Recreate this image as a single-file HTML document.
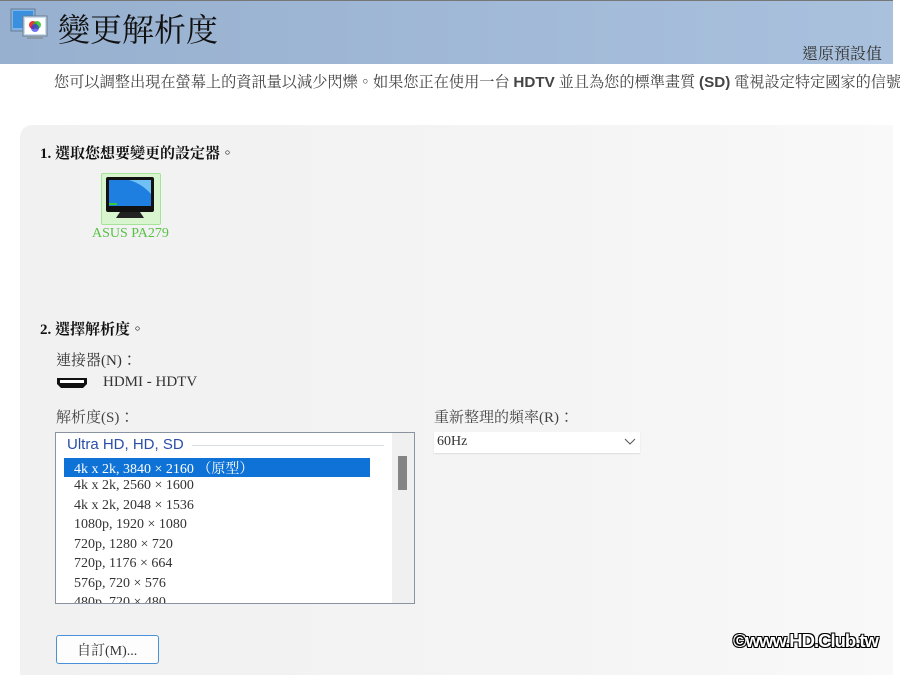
<!DOCTYPE html><html><head><meta charset="utf-8"><style>
body{margin:0;width:900px;height:675px;overflow:hidden;background:#fff;font-family:"Liberation Serif","Noto Serif CJK SC",serif;position:relative;color:#222}
.abs{position:absolute;white-space:nowrap}
#hdr{left:0;top:0;width:893px;height:63px;background:linear-gradient(90deg,#97b0cf,#a9c1dd);border-top:1px solid #777}
#panel{left:20px;top:125px;width:873px;height:550px;background:linear-gradient(90deg,#f1f1f1,#f4f4f4 60%,#f9f9f9);border-radius:12px 0 0 0}
.cjk{font-family:"Liberation Serif","Noto Serif CJK TC",serif}
.sans{font-family:"Liberation Sans","Noto Sans CJK TC",sans-serif}
.row{position:absolute;left:18px;font-size:14px;color:#333}
</style></head><body>
<div id="hdr" class="abs"></div>
<svg class="abs" style="left:9px;top:8px" width="40" height="32" viewBox="0 0 40 32">
<rect x="2" y="1" width="24" height="22" fill="#7fb3e8" stroke="#6a7c8e"/><rect x="4" y="3" width="20" height="17" fill="#3a8fdf"/>
<rect x="14" y="8" width="24" height="20" fill="#c9dbee" stroke="#6a7c8e"/><rect x="16" y="10" width="20" height="16" fill="#fff"/>
<circle cx="24" cy="17" r="4" fill="#e33"/><circle cx="28" cy="17" r="4" fill="#2b2" opacity=".8"/><circle cx="26" cy="20" r="4" fill="#33e" opacity=".7"/>
<rect x="18" y="28" width="16" height="3" fill="#8a98a8"/></svg>
<div class="abs cjk" style="left:58px;top:5px;font-size:32px;color:#111">變更解析度</div>
<div class="abs cjk" style="left:802px;top:41px;font-size:16px;color:#333">還原預設值</div>
<div class="abs cjk" style="left:54px;top:71px;font-size:15.2px;color:#444">您可以調整出現在螢幕上的資訊量以減少閃爍。如果您正在使用一台 <b class="sans">HDTV</b> 並且為您的標準畫質 <b class="sans">(SD)</b> 電視設定特定國家的信號</div>
<div id="panel" class="abs"></div>
<div class="abs cjk" style="left:40px;top:142px;font-size:15px;font-weight:bold;color:#111">1. 選取您想要變更的設定器。</div>
<div class="abs" style="left:101px;top:173px;width:58px;height:50px;background:#d8f5d0;border:1px solid #a6e39a;border-radius:2px"></div>
<svg class="abs" style="left:104px;top:176px" width="52" height="44" viewBox="0 0 52 44"><rect x="2" y="1" width="48" height="35" rx="2" fill="#111"/><rect x="5" y="4" width="42" height="26" fill="#1e7fe0"/><path d="M25 4h22v14C40 10 32 6 25 4z" fill="#6fc0f5"/><rect x="5" y="27" width="8" height="2" fill="#3c3"/><path d="M16 36h20l4 6H12z" fill="#222"/></svg>
<div class="abs cjk" style="left:92px;top:226px;font-size:14px;color:#58c244">ASUS PA279</div>
<div class="abs cjk" style="left:40px;top:318px;font-size:15px;font-weight:bold;color:#111">2. 選擇解析度。</div>
<div class="abs cjk" style="left:56px;top:349px;font-size:15px;color:#333">連接器(N)：</div>
<svg class="abs" style="left:56px;top:376px" width="32" height="14" viewBox="0 0 32 14"><path d="M1 2h30v6l-4 4H5L1 8z" fill="#111"/><rect x="4" y="4" width="24" height="3" fill="#fff"/></svg>
<div class="abs cjk" style="left:103px;top:374px;font-size:15px;color:#333">HDMI - HDTV</div>
<div class="abs cjk" style="left:56px;top:406px;font-size:15px;color:#444">解析度(S)：</div>
<div class="abs" style="left:55px;top:432px;width:358px;height:170px;background:#fff;border:1px solid #8a94a0;overflow:hidden">
<div class="abs sans" style="left:11px;top:3px;font-size:15px;color:#2a4ea8">Ultra HD, HD, SD</div>
<div class="abs" style="left:136px;top:12px;width:192px;height:1px;background:#d8dee6"></div>
<div class="abs" style="left:8px;top:25px;width:306px;height:19px;background:#0f72d6"></div>
<div class="row" style="top:25px;color:#fff">4k x 2k, 3840 × 2160 （原型）</div>
<div class="row" style="top:45px">4k x 2k, 2560 × 1600</div>
<div class="row" style="top:65px">4k x 2k, 2048 × 1536</div>
<div class="row" style="top:84px">1080p, 1920 × 1080</div>
<div class="row" style="top:104px">720p, 1280 × 720</div>
<div class="row" style="top:123px">720p, 1176 × 664</div>
<div class="row" style="top:143px">576p, 720 × 576</div>
<div class="row" style="top:162px">480p, 720 × 480</div>
<div class="abs" style="left:336px;top:0;width:22px;height:170px;background:#f0f0f0"></div>
<div class="abs" style="left:342px;top:23px;width:9px;height:34px;background:#858585"></div>
</div>
<div class="abs cjk" style="left:434px;top:406px;font-size:15px;color:#444">重新整理的頻率(R)：</div>
<div class="abs" style="left:434px;top:432px;width:206px;height:21px;background:#fff;box-shadow:0 1px 1px #ddd"></div>
<div class="abs cjk" style="left:437px;top:434px;font-size:14px;color:#333">60Hz</div>
<svg class="abs" style="left:624px;top:438px" width="12" height="8"><path d="M1 1l5 5 5-5" fill="none" stroke="#555"/></svg>
<div class="abs" style="left:56px;top:635px;width:101px;height:27px;background:#fdfdfd;border:1px solid #4a90d9;border-radius:3px"></div>
<div class="abs cjk" style="left:77px;top:640px;font-size:14px;color:#333">自訂(M)...</div>
<div class="abs sans" style="left:733px;top:630px;font-size:18.5px;font-weight:bold;color:#fff;letter-spacing:-1px;text-shadow:-1px -1px 0 #000,1px -1px 0 #000,-1px 1px 0 #000,1px 1px 0 #000">©www.HD.Club.tw</div>
</body></html>
